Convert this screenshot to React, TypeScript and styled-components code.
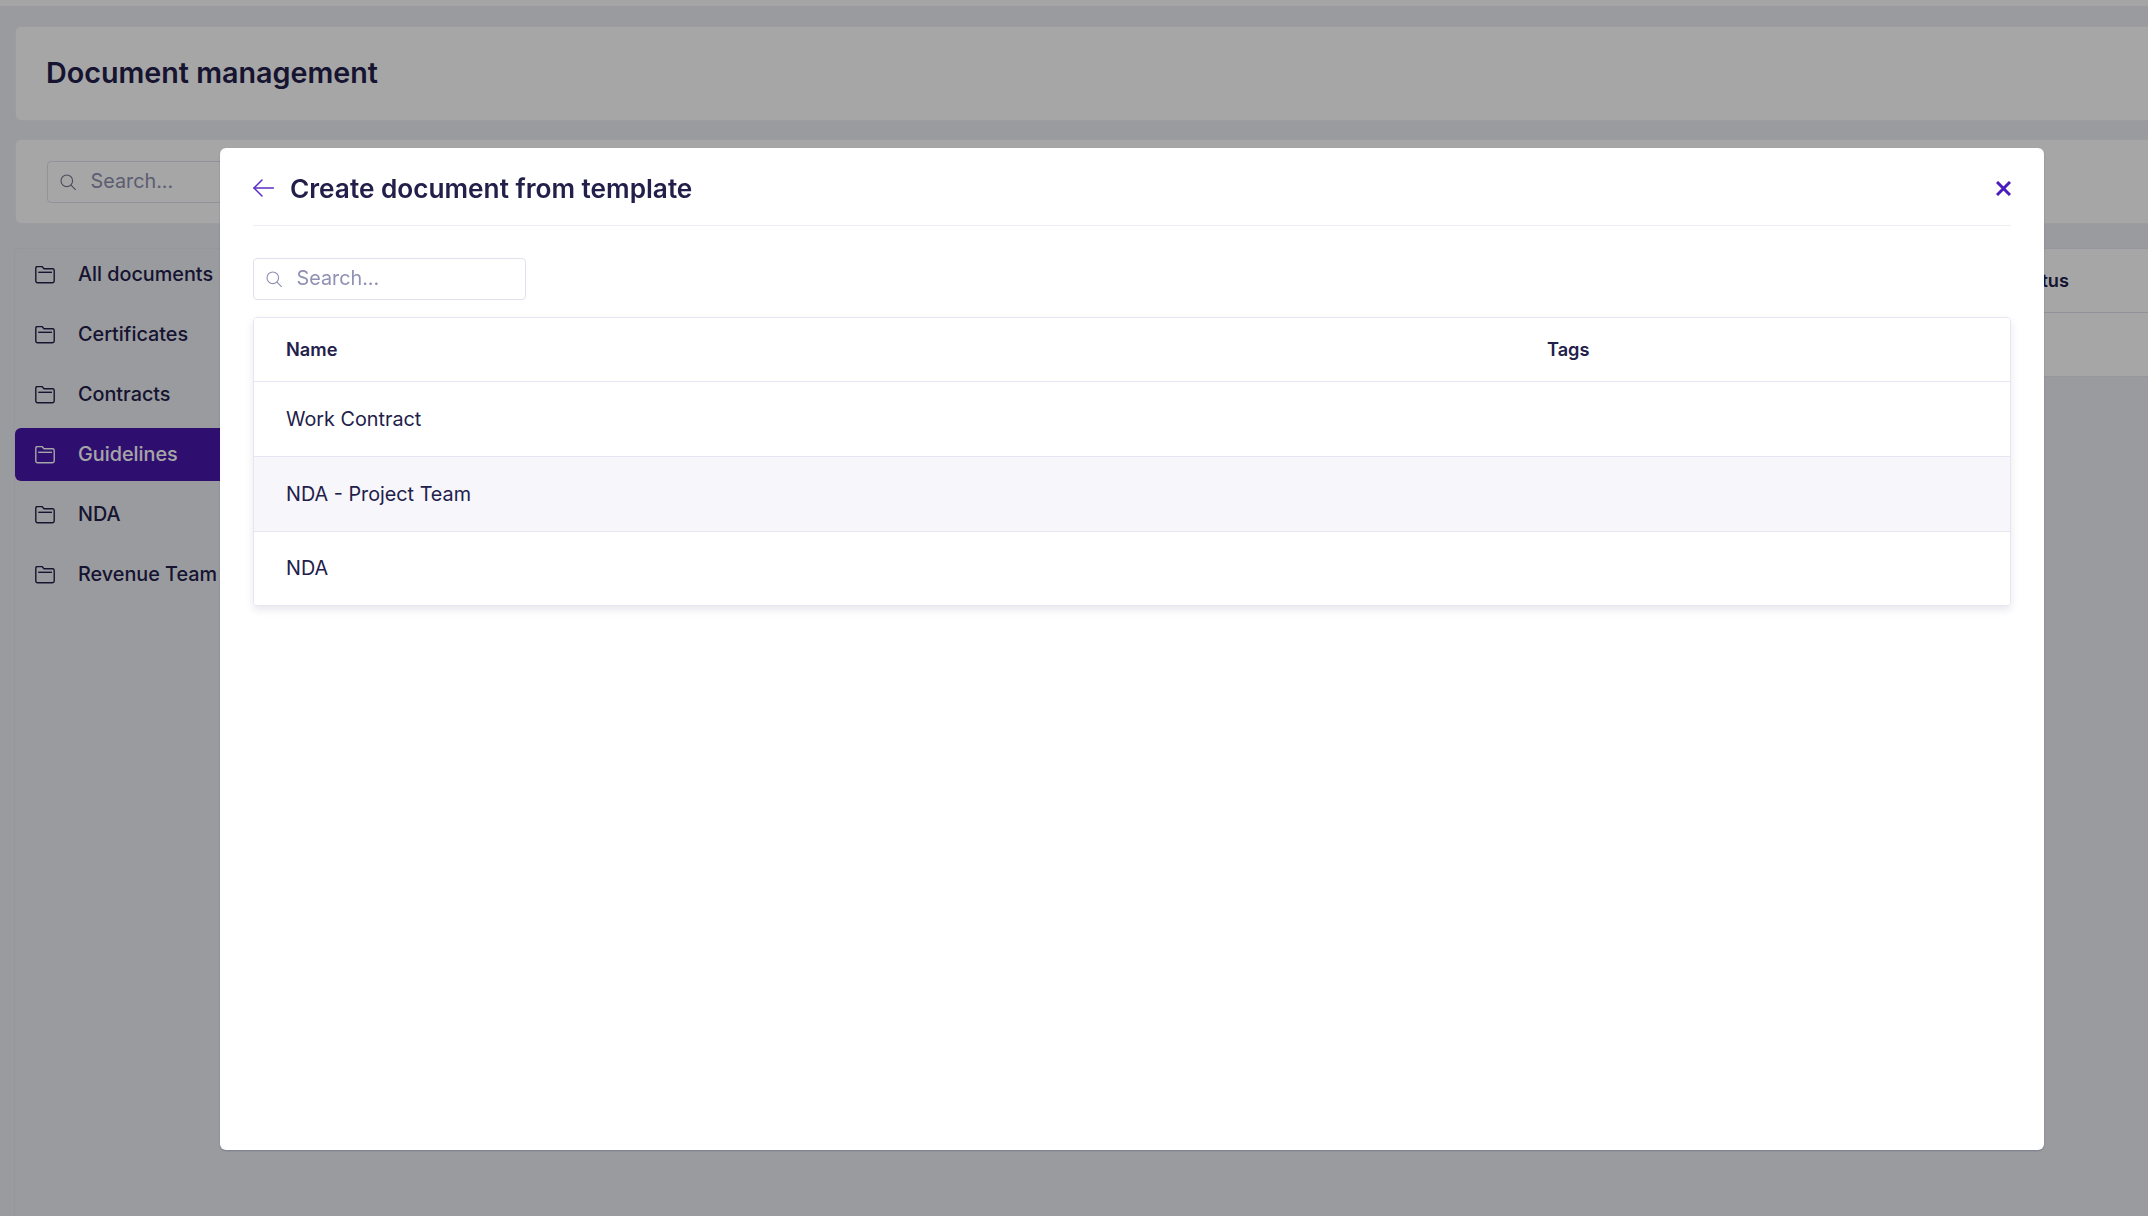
import React from "react";
import styled, { createGlobalStyle } from "styled-components";

const Global = createGlobalStyle`
  html, body { margin: 0; padding: 0; width: 100%; height: 100%; overflow: hidden; background: #edeef5; }
  * { box-sizing: border-box; }
  body { font-family: Inter, "Noto Sans", sans-serif; color: #22204a; }
`;

const Page = styled.div`
  width: 2148px;
  height: 1216px;
  overflow: hidden;
  display: flex;
  flex-direction: column;
  background: #edeef5;
`;
const TopBar = styled.div`
  height: 6px;
  flex: none;
  background: #fdfdfd;
`;
const Content = styled.div`
  flex: 1;
  display: flex;
  flex-direction: column;
  padding: 20px 0 0 15px;
`;
const Card = styled.div`
  background: #ffffff;
  border-radius: 6px 0 0 6px;
  border: 1px solid #f0f0f7;
  border-right: 0;
`;
const HeaderCard = styled(Card)`
  height: 95px;
  display: flex;
  align-items: center;
  padding-left: 30px;
`;
const PageTitle = styled.h1`
  margin: 0 0 2px;
  font-size: 28.7px;
  line-height: 36px;
  font-weight: 600;
  color: #22204a;
`;
const FilterCard = styled(Card)`
  margin-top: 18px;
  height: 85px;
  display: flex;
  align-items: center;
  padding-left: 31px;
`;
const SearchBox = styled.div<{ $width: number; $ink: string }>`
  width: ${(p) => p.$width}px;
  height: 42px;
  flex: none;
  display: flex;
  align-items: center;
  gap: 14.5px;
  padding: 0 0 0 12px;
  background: #ffffff;
  border: 1px solid #e1e1ee;
  border-radius: 4px;
  font-size: 19.8px;
  color: ${(p) => p.$ink};
`;
const SearchText = styled.span`
  padding-bottom: 2px;
`;
const Body = styled.div`
  margin: 24px 0 0 -1px;
  flex: 1;
  display: flex;
`;
const Sidebar = styled.nav`
  width: 221px;
  flex: none;
  border-left: 1px solid #e6e6f0;
  border-top: 1px solid #e6e6f0;
  border-radius: 4px 0 0 0;
  display: flex;
  flex-direction: column;
  gap: 7px;
`;
const NavItem = styled.div<{ $active?: boolean }>`
  height: 53px;
  display: flex;
  align-items: center;
  gap: 23px;
  padding-left: 20px;
  font-size: 19.8px;
  font-weight: 500;
  border-radius: 6px 0 0 6px;
  color: ${(p) => (p.$active ? "#ffffff" : "#22204a")};
  background: ${(p) => (p.$active ? "#4817ac" : "transparent")};
  &:first-child {
    margin-top: -1px;
  }
`;
const NavLabel = styled.span`
  padding-bottom: 2px;
`;
const TablePanel = styled.div`
  flex: 1;
  align-self: flex-start;
  height: 129px;
  background: #ffffff;
  border-top: 1px solid #e6e6f0;
  border-bottom: 1px solid #e6e6f0;
`;
const BackHead = styled.div`
  height: 64px;
  display: flex;
  align-items: center;
  justify-content: flex-end;
  padding: 0 79px 2px 0;
  font-size: 18.2px;
  font-weight: 600;
  border-bottom: 1px solid #e1e1ee;
`;
const Overlay = styled.div`
  position: fixed;
  inset: 0;
  background: rgba(0, 0, 0, 0.35);
`;
const Modal = styled.section`
  position: fixed;
  left: 220px;
  top: 148px;
  width: 1824px;
  height: 1002px;
  display: flex;
  flex-direction: column;
  padding: 0 33px;
  background: #ffffff;
  border-radius: 6px;
  box-shadow: 0 1px 2px rgba(31, 27, 74, 0.25);
`;
const ModalHead = styled.header`
  height: 78px;
  flex: none;
  display: flex;
  align-items: center;
  padding-top: 5px;
  border-bottom: 1px solid #eeeef5;
`;
const BackButton = styled.span`
  width: 37px;
  flex: none;
  display: flex;
  align-items: center;
  padding-bottom: 2px;
  color: #5a2cc4;
`;
const ModalTitle = styled.h2`
  margin: 0;
  flex: 1;
  font-size: 26.2px;
  line-height: 34px;
  font-weight: 600;
  color: #22204a;
`;
const CloseButton = styled.span`
  display: flex;
  padding-bottom: 2px;
  color: #4a1bbd;
`;
const ModalSearchRow = styled.div`
  margin-top: 32px;
  flex: none;
`;
const DocTable = styled.div`
  margin-top: 17px;
  flex: none;
  border: 1px solid #e6e6f2;
  border-radius: 4px;
  box-shadow: 0 4px 8px rgba(31, 27, 74, 0.1);
  overflow: hidden;
`;
const Row = styled.div<{ $head?: boolean; $hover?: boolean }>`
  height: ${(p) => (p.$head ? "63px" : "74.8px")};
  display: grid;
  grid-template-columns: 1261px 1fr;
  align-items: center;
  padding: 0 0 ${(p) => (p.$head ? 1 : 0)}px 32px;
  font-size: ${(p) => (p.$head ? 18.2 : 19.8)}px;
  font-weight: ${(p) => (p.$head ? 600 : 400)};
  color: #22204a;
  background: ${(p) => (p.$hover ? "#f6f6fb" : "#ffffff")};
  & + & {
    border-top: 1px solid #e6e6f2;
  }
`;

const FolderIcon = () => (
  <svg width="20" height="18" viewBox="0 0 20 18" fill="none" stroke="currentColor" strokeWidth="1.4" strokeLinejoin="round" style={{ flex: "none" }}>
    <path d="M0.8 2.2A1.7 1.7 0 0 1 2.5 0.5H7L9 2.8H17.5A1.7 1.7 0 0 1 19.2 4.5V15A1.7 1.7 0 0 1 17.5 16.7H2.5A1.7 1.7 0 0 1 0.8 15Z" />
    <path d="M3.2 6.3H17" />
  </svg>
);
const SearchIcon = ({ color }: { color: string }) => (
  <svg width="16" height="16" viewBox="0 0 16 16" fill="none" stroke={color} strokeWidth="1.15" strokeLinecap="round" style={{ flex: "none" }}>
    <circle cx="6.8" cy="6.8" r="5.8" />
    <path d="M11 11.2L15.4 15.6" />
  </svg>
);
const ArrowIcon = () => (
  <svg width="21" height="18" viewBox="0 0 21 18" fill="none" stroke="currentColor" strokeWidth="1.5" strokeLinecap="round" strokeLinejoin="round">
    <path d="M9 1L1 9L9 17" />
    <path d="M1 9H20.5" />
  </svg>
);
const CloseIcon = () => (
  <svg width="15" height="15" viewBox="0 0 15 15" fill="none" stroke="currentColor" strokeWidth="3">
    <path d="M1 1L14 14M14 1L1 14" />
  </svg>
);

const folders = ["All documents", "Certificates", "Contracts", "Guidelines", "NDA", "Revenue Team"];
const templates = ["Work Contract", "NDA - Project Team", "NDA"];

export default function App() {
  return (
    <Page>
      <Global />
      <TopBar />
      <Content>
        <HeaderCard>
          <PageTitle>Document management</PageTitle>
        </HeaderCard>
        <FilterCard>
          <SearchBox $width={273} $ink="#8f8fb0">
            <SearchIcon color="#77778f" />
            <SearchText>Search...</SearchText>
          </SearchBox>
        </FilterCard>
        <Body>
          <Sidebar>
            {folders.map((f) => (
              <NavItem key={f} $active={f === "Guidelines"}>
                <FolderIcon />
                <NavLabel>{f}</NavLabel>
              </NavItem>
            ))}
          </Sidebar>
          <TablePanel>
            <BackHead>Status</BackHead>
          </TablePanel>
        </Body>
      </Content>
      <Overlay />
      <Modal>
        <ModalHead>
          <BackButton>
            <ArrowIcon />
          </BackButton>
          <ModalTitle>Create document from template</ModalTitle>
          <CloseButton>
            <CloseIcon />
          </CloseButton>
        </ModalHead>
        <ModalSearchRow>
          <SearchBox $width={273} $ink="#9090b4">
            <SearchIcon color="#9090b4" />
            <SearchText>Search...</SearchText>
          </SearchBox>
        </ModalSearchRow>
        <DocTable>
          <Row $head>
            <span>Name</span>
            <span>Tags</span>
          </Row>
          {templates.map((t, i) => (
            <Row key={t} $hover={i === 1}>
              <span>{t}</span>
            </Row>
          ))}
        </DocTable>
      </Modal>
    </Page>
  );
}
